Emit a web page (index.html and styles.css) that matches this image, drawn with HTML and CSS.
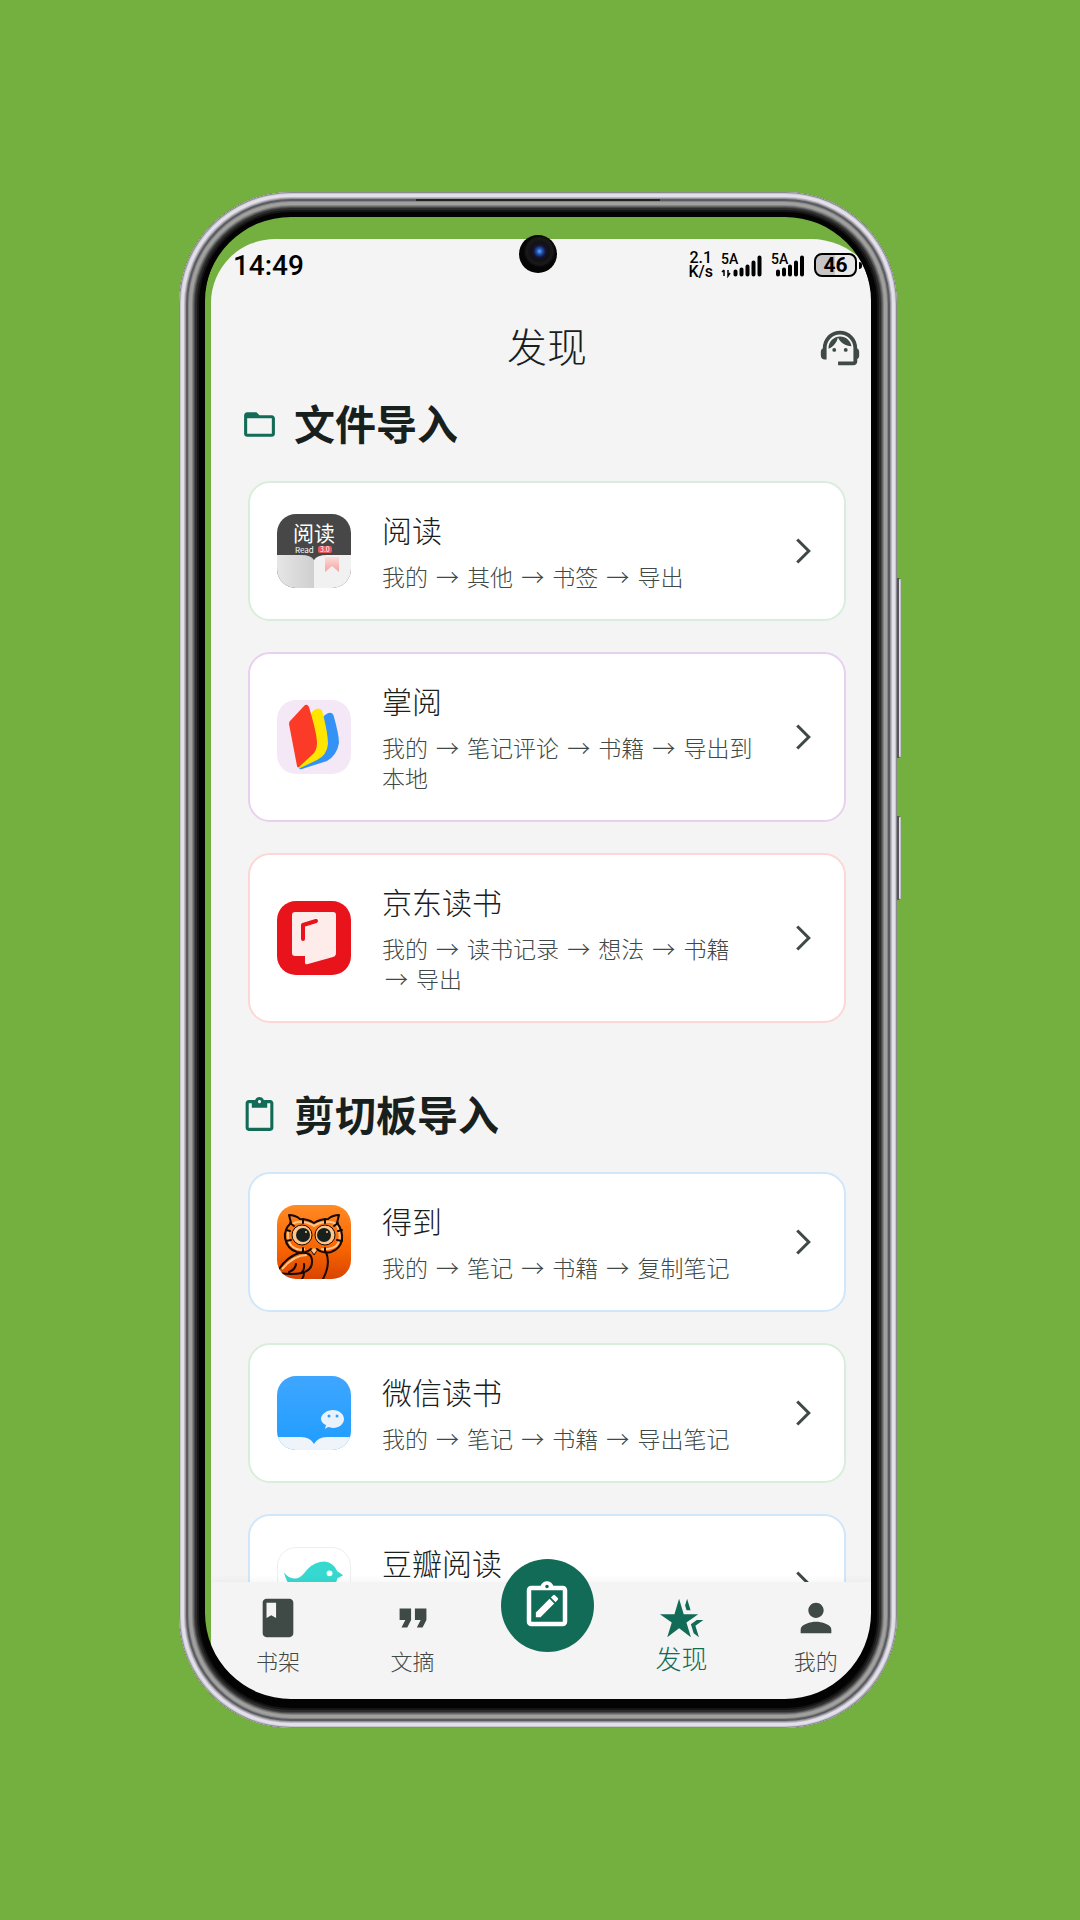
FILE: index.html
```
<!DOCTYPE html>
<html lang="zh-CN">
<head>
    <meta charset="UTF-8">
    <meta name="viewport" content="width=device-width, initial-scale=1.0">
    <title>发现</title>
    <link rel="stylesheet" href="styles.css">
</head>
<body>
    <div class="phone">
        <div class="screen">
            <div class="status-bar">
                <span class="clock">14:49</span>
                <div class="status-right">
                    <span class="speed">2.1<br>K/s</span>
                    <svg class="signal" viewBox="0 0 42 26">
                        <text x="0" y="12">5A</text>
                        <path d="M3 24v-6M1 20l2-2M7 18v6l2-3" stroke="#000" stroke-width="1.5" fill="none"/>
                        <path d="M14.500 22.500v-3M20.500 22.500v-5M26.500 22.500v-8M32.500 22.500v-12M38.500 22.500v-17" stroke="#000" stroke-width="4" stroke-linecap="round"/>
                    </svg>
                    <svg class="signal narrow" viewBox="0 0 35 26">
                        <text x="0" y="12">5A</text>
                        <path d="M7 22.500v-3M13 22.500v-5M19 22.500v-8M25 22.500v-12M31 22.500v-17" stroke="#000" stroke-width="4" stroke-linecap="round"/>
                    </svg>
                    <span class="battery">46</span>
                </div>
            </div>

            <header class="app-bar">
                <h1>发现</h1>
                <button class="support" aria-label="客服">
                    <svg viewBox="0 0 24 24"><path d="M21 12.220C21 6.730 16.740 3 12 3c-4.690 0-9 3.650-9 9.280-.6.340-1 .980-1 1.720v2c0 1.100.9 2 2 2h1v-6.100c0-3.870 3.130-7 7-7s7 3.130 7 7V19h-8v2h8c1.100 0 2-.9 2-2v-1.220c.590-.310 1-.920 1-1.640v-2.300c0-.7-.410-1.310-1-1.620z"/><circle cx="9" cy="13" r="1"/><circle cx="15" cy="13" r="1"/><path d="M18 11.030C17.520 8.180 15.040 6 12.050 6c-3.030 0-6.290 2.510-6.030 6.450 2.470-1.010 4.330-3.210 4.860-5.890 1.310 2.630 4 4.440 7.120 4.470z"/></svg>
                </button>
            </header>

            <main class="content">
                <section>
                    <h2 class="section-title">
                        <svg viewBox="0 0 24 24"><path d="M20 6h-8l-2-2H4c-1.100 0-1.990.9-1.990 2L2 18c0 1.100.9 2 2 2h16c1.100 0 2-.9 2-2V8c0-1.100-.9-2-2-2zm0 12H4V8h16v10z"/></svg>
                        <span>文件导入</span>
                    </h2>
                    <div class="cards">
                        <a class="card green" href="#">
                            <svg class="app-icon" viewBox="0 0 74 74">
                                <defs>
                                    <linearGradient id="page" x1="0" x2="1"><stop offset="0" stop-color="#e6e6e6"/><stop offset="1" stop-color="#cfcfcf"/></linearGradient>
                                    <linearGradient id="mark" x1="0" y1="0" x2="0" y2="1"><stop offset="0" stop-color="#fbdcda"/><stop offset="1" stop-color="#f4a19d"/></linearGradient>
                                </defs>
                                <rect width="74" height="74" fill="#474747"/>
                                <path d="M0 41h24q10 0 13 5v28H0z" fill="url(#page)"/>
                                <path d="M74 41H50q-10 0-13 5v28h37z" fill="#f1f1f1"/>
                                <path d="M48 43h14v15l-7-6-7 6z" fill="url(#mark)"/>
                                <text x="16" y="27" font-size="21" font-weight="400" fill="#fff">阅读</text>
                                <text x="18" y="39" font-size="8" font-weight="400" fill="#fff">Read</text>
                                <rect x="41" y="32" width="14" height="7" rx="2" fill="#e8595c"/>
                                <text x="43" y="38" font-size="7" font-weight="400" fill="#fff">3.0</text>
                            </svg>
                            <div class="info">
                                <h3>阅读</h3>
                                <p>我的 <i>→</i> 其他 <i>→</i> 书签 <i>→</i> 导出</p>
                            </div>
                            <svg class="chevron" viewBox="0 0 24 24"><path d="m9 6 6 6-6 6"/></svg>
                        </a>
                        <a class="card purple" href="#">
                            <svg class="app-icon" viewBox="0 0 74 74">
                                <rect width="74" height="74" fill="#f4e8f7"/>
                                <path d="M46 17q5-5 8-4 2 0 3 4 5 18 5 26-2 12-12 18L25 69q-2 1-3-1z" fill="#3492f6"/>
                                <path d="M35 12q5-5 8-3 2 0 3 5 5 20 5 30-1 11-11 16L23 68q-2 0-2-1z" fill="#ffe500"/>
                                <path d="M14 20 27 6q3-3 5 1 8 27 8 36 0 8-5 12L22 67q-2 1-2-1L12 24q0-3 2-4z" fill="#fb3b28"/>
                            </svg>
                            <div class="info">
                                <h3>掌阅</h3>
                                <p>我的 <i>→</i> 笔记评论 <i>→</i> 书籍 <i>→</i> 导出到本地</p>
                            </div>
                            <svg class="chevron" viewBox="0 0 24 24"><path d="m9 6 6 6-6 6"/></svg>
                        </a>
                        <a class="card red" href="#">
                            <svg class="app-icon" viewBox="0 0 74 74">
                                <rect width="74" height="74" fill="#e9131b"/>
                                <path d="M18 11h38q3 0 3 3v38q0 3-3 4L31 63q-3 1-3-1v-7H18q-3 0-3-3V14q0-3 3-3z" fill="#feecea"/>
                                <path d="M26 38V24l13-4" fill="none" stroke="#e9131b" stroke-width="4" stroke-linecap="round" stroke-linejoin="round"/>
                            </svg>
                            <div class="info">
                                <h3>京东读书</h3>
                                <p>我的 <i>→</i> 读书记录 <i>→</i> 想法 <i>→</i> 书籍 <i>→</i> 导出</p>
                            </div>
                            <svg class="chevron" viewBox="0 0 24 24"><path d="m9 6 6 6-6 6"/></svg>
                        </a>
                    </div>
                </section>

                <section>
                    <h2 class="section-title">
                        <svg viewBox="0 0 24 24"><path d="M19 2h-4.180C14.400.840 13.300 0 12 0c-1.300 0-2.400.840-2.820 2H5c-1.100 0-2 .9-2 2v16c0 1.100.9 2 2 2h14c1.100 0 2-.9 2-2V4c0-1.100-.9-2-2-2zm-7 0c.550 0 1 .450 1 1s-.450 1-1 1-1-.450-1-1 .450-1 1-1zm7 18H5V4h2v3h10V4h2v16z"/></svg>
                        <span>剪切板导入</span>
                    </h2>
                    <div class="cards">
                        <a class="card blue" href="#">
                            <svg class="app-icon" viewBox="0 0 74 74">
                                <defs><linearGradient id="owl" x1="0" y1="0" x2="0" y2="1"><stop offset="0" stop-color="#ff8a25"/><stop offset=".6" stop-color="#f86400"/><stop offset="1" stop-color="#d94500"/></linearGradient></defs>
                                <rect width="74" height="74" fill="url(#owl)"/>
                                <g fill="none" stroke="#ffc48b" stroke-width="2">
                                    <path d="M14 20q5-4 12-3 7 1 11 4 4-3 11-4 8-1 12 3 6 14-1 21-6 4-15 3M11 26q-1 12 5 16 5 4 12 2"/>
                                    <path d="M5 64q12-14 25-14"/>
                                </g>
                                <g fill="none" stroke="#160a05" stroke-width="2" stroke-linejoin="round" stroke-linecap="round">
                                    <path d="M14 18 12 10q6 0 11 4 8 0 14 4 6-4 14-4 5-4 11-4l-2 8q6 7 5 17-2 9-11 12-8 2-14-3l-3 5-3-5q-6 5-14 3Q10 44 8 33q-1-9 6-15z"/>
                                    <path d="M2 64q8-12 20-16 12-2 13 7 1 10-10 13-10 2-23 0M12 67q6-2 7-8M24 68q4-3 3-9M25 74q2-3 2-6M49 47q5 12-3 27"/>
                                    <path d="M26 14v4M48 14v4M13 18l4 3M61 18l-4 3M9 36l5-1M65 36l-5-1M26 47v-4M48 47v-4M9 25l4 1M65 25l-4 1"/>
                                </g>
                                <g stroke="#160a05"><circle cx="25" cy="30" r="10" fill="#ffc48b"/><circle cx="48" cy="30" r="10" fill="#ffc48b"/></g>
                                <circle cx="26" cy="30" r="7"/><circle cx="47" cy="30" r="7"/>
                                <g fill="#ffc48b"><circle cx="29" cy="27" r="1"/><circle cx="50" cy="27" r="1"/><path d="m37 49-3-4 3-2 3 2z"/></g>
                            </svg>
                            <div class="info">
                                <h3>得到</h3>
                                <p>我的 <i>→</i> 笔记 <i>→</i> 书籍 <i>→</i> 复制笔记</p>
                            </div>
                            <svg class="chevron" viewBox="0 0 24 24"><path d="m9 6 6 6-6 6"/></svg>
                        </a>
                        <a class="card green" href="#">
                            <svg class="app-icon" viewBox="0 0 74 74">
                                <defs><linearGradient id="sky" x1="0" y1="0" x2="0" y2="1"><stop offset="0" stop-color="#3fa6ff"/><stop offset="1" stop-color="#1e9dff"/></linearGradient></defs>
                                <rect width="74" height="74" fill="url(#sky)"/>
                                <path d="M0 61h24q9 0 13 7 4-7 13-7h24v13H0z" fill="#eff4fb"/>
                                <path d="M56 34c6 0 11 4 11 9s-5 9-11 9l-5-1-3 2 1-4c-3-1-5-4-5-6 0-5 6-9 12-9z" fill="#eaf3fc"/>
                                <circle cx="52" cy="40" r="1.500" fill="#2a9fff"/><circle cx="60" cy="40" r="1.500" fill="#2a9fff"/>
                            </svg>
                            <div class="info">
                                <h3>微信读书</h3>
                                <p>我的 <i>→</i> 笔记 <i>→</i> 书籍 <i>→</i> 导出笔记</p>
                            </div>
                            <svg class="chevron" viewBox="0 0 24 24"><path d="m9 6 6 6-6 6"/></svg>
                        </a>
                        <a class="card blue" href="#">
                            <svg class="app-icon outlined" viewBox="0 0 74 74">
                                <path d="M6 25q6 8 14 6 4-1 10-9 8-8 18-8 9 1 13 10l6 4-6 3Q57 49 36 50 12 49 6 25z" fill="#36d9d0"/>
                                <path d="M38 45q8-4 6-10" fill="none" stroke="#fff"/>
                                <circle cx="53" cy="26" r="3" fill="#fff"/>
                            </svg>
                            <div class="info">
                                <h3>豆瓣阅读</h3>
                                <p>我的 <i>→</i> 笔记 <i>→</i> 导出</p>
                            </div>
                            <svg class="chevron" viewBox="0 0 24 24"><path d="m9 6 6 6-6 6"/></svg>
                        </a>
                    </div>
                </section>
            </main>

            <nav class="tab-bar">
                <a href="#">
                    <svg viewBox="0 0 24 24"><path d="M18 2H6c-1.100 0-2 .9-2 2v16c0 1.100.9 2 2 2h12c1.100 0 2-.9 2-2V4c0-1.100-.9-2-2-2zM6 4h5v8l-2.500-1.500L6 12V4z"/></svg>
                    <span>书架</span>
                </a>
                <a href="#">
                    <svg viewBox="0 0 24 24"><path d="M6 17h3l2-4V7H5v6h3zm8 0h3l2-4V7h-6v6h3z"/></svg>
                    <span>文摘</span>
                </a>
                <div class="fab-slot">
                    <button class="fab" aria-label="新建书摘">
                        <svg viewBox="0 0 24 24"><path fill-rule="evenodd" d="M19 3h-4.180C14.400 1.840 13.300 1 12 1s-2.400.840-2.820 2H5c-1.100 0-2 .9-2 2v14c0 1.100.9 2 2 2h14c1.100 0 2-.9 2-2V5c0-1.100-.9-2-2-2zM12 2.500a.8.8 0 1 1 0 1.600.8.8 0 0 1 0-1.600zM19 19H5V5h14z"/><path transform="translate(5.400 5.400) scale(.55)" d="M3 17.250V21h3.750L17.810 9.940l-3.750-3.750zM20.710 7.040a1 1 0 0 0 0-1.410l-2.340-2.340a1 1 0 0 0-1.410 0l-1.830 1.830 3.750 3.750z"/></svg>
                    </button>
                </div>
                <a class="active" href="#">
                    <svg viewBox="0 0 24 24"><path d="M8.580 10H1l6.170 4.410L4.830 22 11 17.310 17.180 22l-2.350-7.590L21 10h-7.580L11 2zM21.360 22l-1.860-6.010L23.680 13h-3.440l-3.080 2.200 1.460 4.720zM17 8l-1.820-6-1.040 3.450.770 2.550z"/></svg>
                    <span>发现</span>
                </a>
                <a href="#">
                    <svg viewBox="0 0 24 24"><path d="M12 12c2.210 0 4-1.790 4-4s-1.790-4-4-4-4 1.790-4 4 1.790 4 4 4zm0 2c-2.670 0-8 1.340-8 4v2h16v-2c0-2.660-5.330-4-8-4z"/></svg>
                    <span>我的</span>
                </a>
            </nav>
        </div>

        <!-- phone hardware, drawn over the screen -->
        <div class="frame"></div>
        <div class="speaker"></div>
        <div class="camera"></div>
        <div class="side-button volume"></div>
        <div class="side-button power"></div>
    </div>
</body>
</html>
```
FILE: styles.css
```
* {
    box-sizing: border-box;
}
body {
    margin: 0;
    min-height: 100vh;
    display: flex;
    align-items: center;
    justify-content: center;
    background: #74b03f;
    font-family: 'Noto Sans CJK SC', 'Noto Sans', sans-serif;
    font-weight: 300;
    color: #18201d;
}
h1, h2, h3, p {
    margin: 0;
}
a {
    color: inherit;
    text-decoration: none;
}
button {
    border: none;
    padding: 0;
    cursor: pointer;
}
svg {
    display: block;
    flex: none;
    fill: currentColor;
}

/* phone */
.phone {
    position: relative;
    display: flex;
    width: 66.5%;
    height: 80vh;
    margin-right: 4px;
    padding: 47px 14px 28px 32px;
}
.screen {
    flex: 1;
    min-width: 0;
    display: flex;
    flex-direction: column;
    overflow: hidden;
    background: #f4f4f4;
    border-radius: 64px 72px 60px 60px;
}
.frame {
    position: absolute;
    inset: 0;
    border-radius: 112px;
    pointer-events: none;
    box-shadow:
        inset 0 0 0 1px #8a8a8e,
        inset 0 0 0 2px #c8c6cc,
        inset 0 0 0 5px #e2e0e8,
        inset 0 0 0 6px #bbb9c1,
        inset 0 0 0 7px #96949c,
        inset 0 0 0 9px #5c5b61,
        inset 0 0 0 10px #858585,
        inset 0 0 0 13px #a0a09e,
        inset 0 0 0 14px #858583,
        inset 0 0 0 15px #666,
        inset 0 0 0 16px #484848,
        inset 0 0 0 18px #2c2c2c,
        inset 0 0 0 20px #151515,
        inset 0 0 0 25px #030303,
        inset 0 -3px 0 26px #030303;
}
.speaker {
    position: absolute;
    top: 7px;
    left: 33%;
    width: 34%;
    height: 2px;
    background: #222;
}
.camera {
    position: absolute;
    top: 43px;
    left: 50%;
    width: 38px;
    height: 38px;
    margin-left: -19px;
    border-radius: 50%;
    background: radial-gradient(circle at 54% 43%, #4db4ff 0, #2450a8 3px, #14143c 6px, #111 9px, #1a1a1a 13px, #050505 16px);
}
.side-button {
    position: absolute;
    left: 100%;
    width: 4px;
    background: #e4e3e8;
    border: 1px solid #55545c;
    border-left-width: 2px;
    border-right-color: #c4c3c8;
    border-radius: 0 3px 3px 0;
}
.volume {
    top: 386px;
    height: 180px;
}
.power {
    top: 624px;
    height: 84px;
}

/* status bar */
.status-bar {
    flex: none;
    display: flex;
    justify-content: space-between;
    align-items: center;
    height: 52px;
    padding: 0 22px;
    font-family: Roboto, sans-serif;
    font-weight: 500;
    color: #000;
}
.clock {
    font-size: 28px;
}
.status-right {
    display: flex;
    align-items: center;
    gap: 8px;
}
.speed {
    font-size: 16px;
    line-height: 14px;
    text-align: center;
}
.signal {
    width: 42px;
    height: 26px;
    font-size: 14px;
}
.signal.narrow {
    width: 35px;
}
.battery {
    position: relative;
    width: 43px;
    height: 24px;
    margin-right: 4px;
    border: 2px solid #000;
    border-radius: 8px;
    background: linear-gradient(90deg, #c6c6c6 50%, #e8e8e8 50%);
    font-size: 21px;
    font-weight: 700;
    line-height: 20px;
    text-align: center;
}
.battery::after {
    content: "";
    position: absolute;
    top: 7px;
    right: -7px;
    width: 3px;
    height: 7px;
    border-radius: 0 3px 3px 0;
    background: #000;
}

/* app bar */
.app-bar {
    flex: none;
    position: relative;
    display: flex;
    align-items: center;
    justify-content: center;
    height: 102px;
}
.app-bar h1 {
    font-size: 40px;
    font-weight: 300;
    line-height: 60px;
    padding-top: 6px;
}
.support {
    position: absolute;
    top: 34px;
    right: 20px;
    background: none;
    color: #3f4945;
}
.support svg {
    width: 46px;
    height: 46px;
}

/* list */
.content {
    flex: 1;
    min-height: 0;
    overflow: hidden;
    padding: 0 37px;
}
.content section + section {
    margin-top: 61px;
}
.section-title {
    display: flex;
    align-items: center;
    gap: 16px;
    height: 62px;
    margin: 0 -7px 26px;
    font-size: 41px;
    font-weight: 700;
}
.section-title span {
    line-height: 58px;
    padding-bottom: 4px;
}
.section-title svg {
    width: 37px;
    height: 37px;
    color: #126b57;
}
.cards {
    display: flex;
    flex-direction: column;
    gap: 31px;
}
.card {
    display: flex;
    align-items: center;
    padding: 24px 18px 24px 27px;
    background: #fff;
    border: 2px solid;
    border-radius: 22px;
}
.card.green {
    border-color: #d9eeda;
}
.card.purple {
    border-color: #e8d0ef;
}
.card.red {
    border-color: #fcd7d5;
}
.card.blue {
    border-color: #d0e6fb;
}
.app-icon {
    width: 74px;
    height: 74px;
    border-radius: 19px;
}
.app-icon.outlined {
    border: 1px solid #eee;
}
.info {
    flex: 1;
    margin: 0 22px 0 31px;
    padding-bottom: 4px;
}
.info h3 {
    font-size: 30px;
    font-weight: 300;
    line-height: 44px;
    margin-bottom: 10px;
}
.info p {
    font-size: 23px;
    line-height: 30px;
    color: #3f4945;
}
.info i {
    font-style: normal;
    margin: 0 3px;
}
.chevron {
    width: 46px;
    height: 46px;
    fill: none;
    stroke: #3f4945;
    stroke-width: 1.6px;
}

/* bottom tabs */
.tab-bar {
    flex: none;
    position: relative;
    display: grid;
    grid-template-columns: repeat(5, 1fr);
    height: 118px;
    padding-top: 13px;
    background: #f4f4f4;
    box-shadow: 0 -2px 8px rgba(0, 0, 0, 0.04);
    color: #3f4945;
}
.tab-bar a {
    display: flex;
    flex-direction: column;
    align-items: center;
    font-size: 22px;
    line-height: 38px;
}
.tab-bar a svg {
    width: 46px;
    height: 46px;
}
.tab-bar a.active {
    color: #126b57;
    font-size: 26px;
    line-height: 34px;
}
.fab-slot {
    display: flex;
    justify-content: center;
}
.fab {
    display: flex;
    align-items: center;
    justify-content: center;
    width: 93px;
    height: 93px;
    margin-top: -36px;
    border-radius: 50%;
    background: #126b57;
    color: #fff;
}
.fab svg {
    width: 54px;
    height: 54px;
}
```
